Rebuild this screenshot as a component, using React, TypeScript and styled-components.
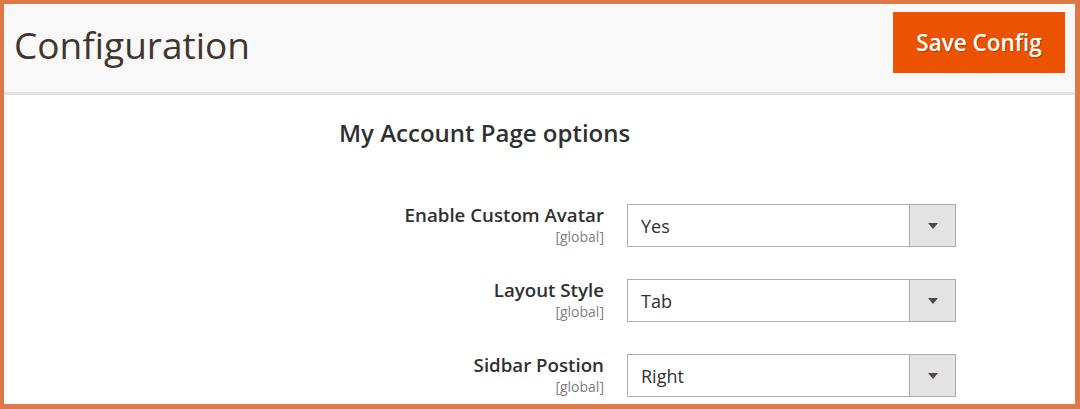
import React from "react";
import styled, { createGlobalStyle } from "styled-components";

const Global = createGlobalStyle`
  html, body { margin: 0; padding: 0; background: #fff; }
  body { font-family: "Open Sans", "Noto Sans", sans-serif; }
  * { box-sizing: border-box; }
`;

const Frame = styled.div`
  width: 1080px;
  height: 409px;
  border-style: solid;
  border-color: #df7847;
  border-width: 4px 5px 5px 4px;
  background: #fff;
  overflow: hidden;
  display: flex;
  flex-direction: column;
`;

const Header = styled.header`
  height: 91px;
  background: #f8f8f8;
  border-bottom: 3px solid #e3e3e3;
  display: flex;
  align-items: flex-start;
  justify-content: space-between;
  padding: 8px 10px 0 10px;
  flex-shrink: 0;
`;

const Title = styled.h1`
  margin: 0;
  font-family: "Open Sans", sans-serif;
  font-weight: 400;
  font-size: 37px;
  line-height: 1;
  color: #41362f;
  padding-top: 14px;
`;

const SaveButton = styled.button`
  width: 172px;
  height: 61px;
  background: #eb5202;
  border: 1px solid #eb5202;
  color: #fff;
  font-family: "Open Sans", sans-serif;
  font-weight: 600;
  font-size: 22.5px;
  text-shadow: 1px 1px 0 rgba(0, 0, 0, 0.25);
  cursor: pointer;
  padding: 0;
`;

const Body = styled.main`
  padding: 22px 0 0 335px;
  display: flex;
  flex-direction: column;
`;

const SectionTitle = styled.h2`
  margin: 0;
  font-family: "Open Sans", sans-serif;
  font-weight: 600;
  font-size: 24px;
  color: #303030;
  line-height: 32px;
`;

const Fields = styled.div`
  margin-top: 55px;
  display: flex;
  flex-direction: column;
  gap: 32px;
  margin-left: -335px;
`;

const Row = styled.div`
  display: grid;
  grid-template-columns: 600px 329px;
  column-gap: 23px;
  align-items: start;
`;

const LabelBox = styled.div`
  text-align: right;
`;

const LabelText = styled.div`
  font-family: "Open Sans", sans-serif;
  font-weight: 600;
  font-size: 18.7px;
  line-height: 21px;
  color: #303030;
`;

const Scope = styled.div`
  margin-top: 4px;
  font-family: "Open Sans", sans-serif;
  font-size: 14px;
  line-height: 16px;
  color: #808080;
`;

const Select = styled.div`
  height: 43px;
  border: 1px solid #adadad;
  display: flex;
  background: #fff;
`;

const Value = styled.div`
  flex: 1;
  padding-left: 13px;
  display: flex;
  align-items: center;
  font-family: "Open Sans", sans-serif;
  font-size: 18px;
  color: #303030;
`;

const Arrow = styled.div`
  width: 46px;
  background: #e3e3e3;
  border-left: 1px solid #adadad;
  display: flex;
  align-items: center;
  justify-content: center;
  &::after {
    content: "";
    width: 0;
    height: 0;
    border-left: 5px solid transparent;
    border-right: 5px solid transparent;
    border-top: 6px solid #514943;
  }
`;

const fields = [
  { label: "Enable Custom Avatar", value: "Yes" },
  { label: "Layout Style", value: "Tab" },
  { label: "Sidbar Postion", value: "Right" },
];

export default function App() {
  return (
    <>
      <Global />
      <Frame>
        <Header>
          <Title>Configuration</Title>
          <SaveButton>Save Config</SaveButton>
        </Header>
        <Body>
          <SectionTitle>My Account Page options</SectionTitle>
          <Fields>
            {fields.map((f) => (
              <Row key={f.label}>
                <LabelBox>
                  <LabelText>{f.label}</LabelText>
                  <Scope>[global]</Scope>
                </LabelBox>
                <Select>
                  <Value>{f.value}</Value>
                  <Arrow />
                </Select>
              </Row>
            ))}
          </Fields>
        </Body>
      </Frame>
    </>
  );
}
